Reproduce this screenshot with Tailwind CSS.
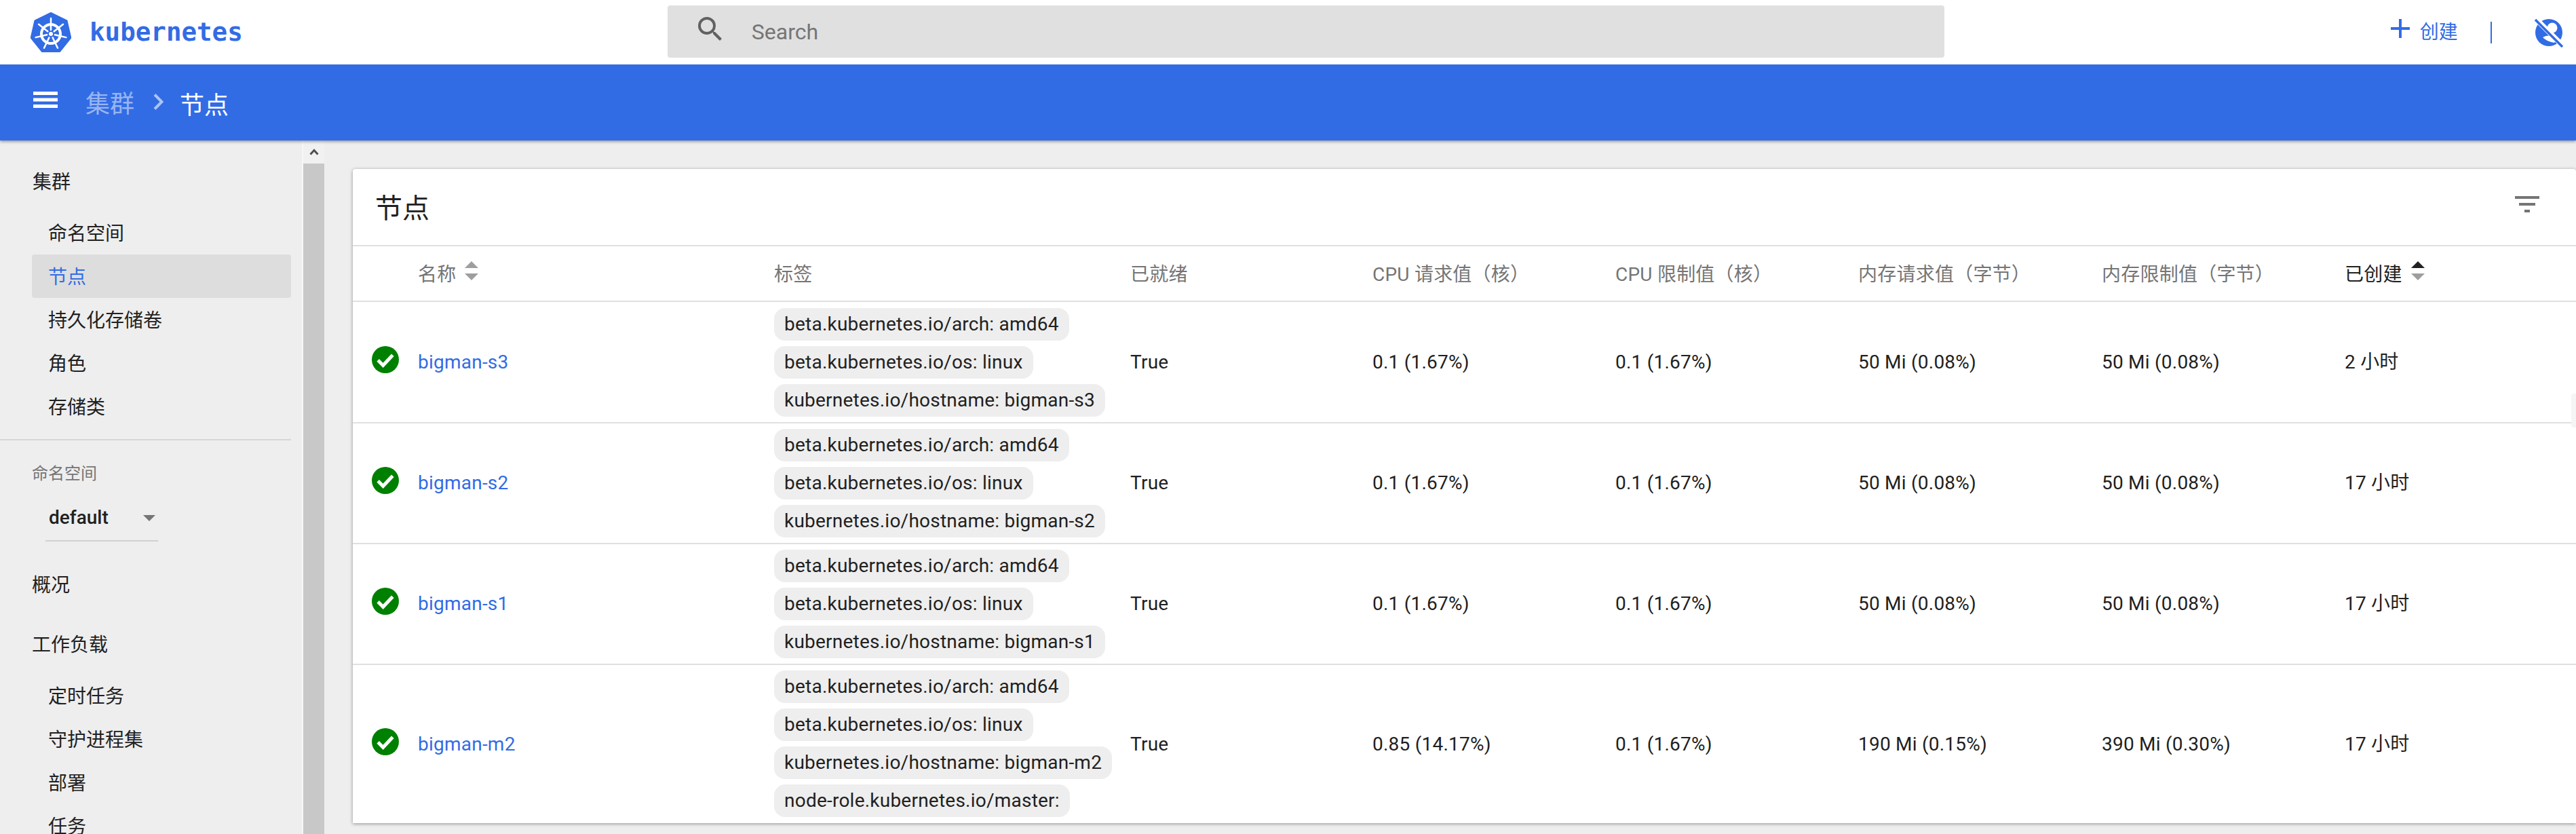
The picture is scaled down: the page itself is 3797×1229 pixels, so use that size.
<!doctype html>
<html><head><meta charset="utf-8"><script src="https://cdn.jsdelivr.net/npm/@tailwindcss/browser@4"></script></head>
<body class="h-screen w-screen overflow-hidden bg-[#eeeeee] font-['Roboto','Noto_Sans_CJK_SC',sans-serif] text-[#212121]">
<div class="flex h-screen flex-col">
<header class="flex h-[95px] shrink-0 items-center bg-white">
  <svg class="ml-[45px] h-[60px] w-[60px]" viewBox="0 0 60 60"><path d="M30 1L53.5 12.3L59.3 37.7L43 58L17 58L.7 37.7L6.5 12.3Z" fill="#326ce5" stroke="#326ce5" stroke-width="2" stroke-linejoin="round"/><g transform="translate(0 1)"><circle cx="30" cy="31" r="14" fill="none" stroke="#fff" stroke-width="4"/><path fill="none" stroke="#fff" stroke-width="2.5" stroke-linecap="round" d="M30 25V8M34.7 27.3L48 16.7M35.9 32.3L52.4 36.1M32.6 36.4L40 51.7M27.4 36.4L20 51.7M24.1 32.3L7.6 36.1M25.3 27.3L12 16.7"/><circle cx="30" cy="31" r="3" fill="#fff"/></g></svg>
  <span class="ml-[27px] font-['DejaVu_Sans_Mono',monospace] text-[37.5px] leading-none font-bold text-[#326ce5]">kubernetes</span>
  <div class="-mt-[2px] ml-[626px] flex h-[77px] w-[1882px] items-center rounded-[4px] bg-[#e0e0e0]">
    <svg class="-mt-[8px] ml-[39px] h-[48px] w-[48px]" viewBox="0 0 24 24" fill="#616161"><path d="M15.5 14h-.79l-.28-.27A6.47 6.47 0 0 0 16 9.5 6.5 6.5 0 1 0 9.5 16c1.61 0 3.09-.59 4.23-1.57l.27.28v.79l5 4.99L20.49 19l-4.99-5zm-6 0C7.01 14 5 11.99 5 9.5S7.01 5 9.5 5 14 7.01 14 9.5 11.99 14 9.5 14z"/></svg>
    <span class="ml-[37px] text-[32px] text-[#757575]">Search</span>
  </div>
  <div class="ml-[648px] flex items-center text-[#326ce5]">
    <svg class="-mt-[12px] h-[48px] w-[48px]" viewBox="0 0 24 24" fill="#326ce5"><path d="M19 13h-6v6h-2v-6H5v-2h6V5h2v6h6v2z"/></svg>
    <span class="ml-[5px] text-[28px]">创建</span>
    <span class="ml-[48px] h-[32px] w-[2px] bg-[#326ce5]"></span>
    <svg class="ml-[60px] h-[48px] w-[48px]" viewBox="0 0 48 48"><circle cx="24" cy="24" r="20" fill="#326ce5"/><circle cx="29" cy="17" r="7.5" fill="#fff"/><path d="M15 31 C22 27 31 28 37 33 L32 39 C26 38 20 36 15 31Z" fill="#fff"/><path d="M4 3L44 43" stroke="#fff" stroke-width="8"/><path d="M4 5L44 45" stroke="#326ce5" stroke-width="3.5"/></svg>
  </div>
</header>
<div class="relative z-10 flex h-[112px] shrink-0 items-center bg-[#326ce5] shadow-[0_2px_4px_rgba(0,0,0,0.35)]">
  <svg class="-mt-[8px] ml-[49px] h-[24px] w-[36px]" viewBox="0 0 36 24" fill="#fff"><rect width="36" height="5"/><rect y="9.5" width="36" height="5"/><rect y="19" width="36" height="5"/></svg>
  <span class="mt-[6px] ml-[41px] text-[36px] text-white/50">集群</span>
  <svg class="-mt-[2px] ml-[28px] h-[24px] w-[15px]" viewBox="0 0 15 24"><path d="M2 1.5L12.5 12L2 22.5" fill="none" stroke="#fff" stroke-opacity=".6" stroke-width="4"/></svg>
  <span class="mt-[10px] ml-[24px] text-[36px] text-white">节点</span>
</div>
<div class="flex min-h-0 flex-1">
  <aside class="w-[445px] shrink-0 overflow-hidden pt-[28px] text-[28px]">
    <div class="flex h-[64px] items-center pt-[4px] pl-[48px]">集群</div>
    <div class="mt-[12px] ml-[47px] w-[382px] [&>div]:pt-[3px]">
      <div class="flex h-[64px] items-center pl-[24px]">命名空间</div>
      <div class="flex h-[64px] items-center rounded-[4px] bg-[#dddddd] pl-[24px] text-[#326ce5]">节点</div>
      <div class="flex h-[64px] items-center pl-[24px]">持久化存储卷</div>
      <div class="flex h-[64px] items-center pl-[24px]">角色</div>
      <div class="flex h-[64px] items-center pl-[24px]">存储类</div>
    </div>
    <div class="mt-[16px] h-[2px] w-[429px] bg-[#d6d6d6]"></div>
    <div class="mt-[31px] pl-[47px] text-[24px] leading-[36px] text-[#757575]">命名空间</div>
    <div class="mt-[19px] ml-[67px] flex h-[63px] w-[166px] items-center justify-between border-b-2 border-[#d0d0d0] pr-[4px] pb-[5px] pl-[5px]">
      <span class="font-medium">default</span>
      <span class="h-0 w-0 border-x-[9px] border-t-[9px] border-x-transparent border-t-[#757575]"></span>
    </div>
    <div class="mt-[33px] flex h-[64px] items-center pl-[47px]">概况</div>
    <div class="mt-[23px] flex h-[64px] items-center pt-[2px] pl-[47px]">工作负载</div>
    <div class="mt-[13px] flex h-[64px] items-center pl-[71px]">定时任务</div>
    <div class="flex h-[64px] items-center pl-[71px]">守护进程集</div>
    <div class="flex h-[64px] items-center pl-[71px]">部署</div>
    <div class="flex h-[64px] items-center pl-[71px]">任务</div>
  </aside>
  <div class="flex w-[33px] shrink-0 flex-col border-l-2 border-[#f7f7f7]">
    <div class="flex h-[34px] items-center justify-center bg-[#f1f1f1]"><svg class="h-[10px] w-[14px]" viewBox="0 0 14 10"><path d="M1.5 8.5L7 2.5L12.5 8.5" fill="none" stroke="#505050" stroke-width="3"/></svg></div>
    <div class="flex-1 bg-[#c8c8c8]"></div>
  </div>
  <main class="relative min-w-0 flex-1 pt-[42px] pl-[42px]">
    <div class="rounded-t-[4px] bg-white shadow-[0_1px_5px_rgba(0,0,0,0.4)]">
      <div class="flex h-[114px] items-center justify-between border-b-2 border-[#e0e0e0] pr-[54px] pl-[33px]">
        <span class="mt-[5px] text-[40px]">节点</span>
        <svg class="-mt-[8px] h-[24px] w-[36px]" viewBox="0 0 36 24" fill="#757575"><rect width="36" height="4"/><rect x="6" y="10" width="24" height="4"/><rect x="14" y="20" width="8" height="4"/></svg>
      </div>
      <table class="w-[3277px] table-fixed text-[28px] leading-[48px] tracking-[0.23px]">
        <thead><tr class="text-left text-[#757575] [&>th]:pt-[4px]">
          <th class="h-[81px] w-[96px] border-b-2 border-[#e0e0e0] font-normal"></th>
          <th class="w-[525px] border-b-2 border-[#e0e0e0] font-normal"><span class="flex items-center gap-[13px]">名称<span class="-mt-[12px] flex flex-col gap-[8px]"><span class="h-0 w-0 border-x-[10px] border-b-[10px] border-x-transparent border-b-[#9e9e9e]"></span><span class="h-0 w-0 border-x-[10px] border-t-[10px] border-x-transparent border-t-[#9e9e9e]"></span></span></span></th>
          <th class="w-[525px] border-b-2 border-[#e0e0e0] font-normal">标签</th>
          <th class="w-[357px] border-b-2 border-[#e0e0e0] font-normal">已就绪</th>
          <th class="w-[358px] border-b-2 border-[#e0e0e0] font-normal">CPU 请求值（核）</th>
          <th class="w-[358px] border-b-2 border-[#e0e0e0] font-normal">CPU 限制值（核）</th>
          <th class="w-[359px] border-b-2 border-[#e0e0e0] font-normal">内存请求值（字节）</th>
          <th class="w-[358px] border-b-2 border-[#e0e0e0] font-normal">内存限制值（字节）</th>
          <th class="border-b-2 border-[#e0e0e0] font-normal text-[#212121]"><span class="flex items-center gap-[13px]">已创建<span class="-mt-[12px] flex flex-col gap-[8px]"><span class="h-0 w-0 border-x-[10px] border-b-[10px] border-x-transparent border-b-[#212121]"></span><span class="h-0 w-0 border-x-[10px] border-t-[10px] border-x-transparent border-t-[#9e9e9e]"></span></span></span></th>
        </tr></thead>
        <tbody>
          <tr class="[&>td]:border-b-2 [&>td]:border-[#e0e0e0]">
            <td class="pb-[8px] pl-[28px]"><svg class="h-[40px] w-[40px]" viewBox="0 0 24 24"><circle cx="12" cy="12" r="12" fill="#008000"/><path d="M5.5 12.5L10 17L18.5 8" fill="none" stroke="#fff" stroke-width="3"/></svg></td>
            <td class="text-[#326ce5]">bigman-s3</td>
            <td class="pt-[9px] pb-[8px]"><div class="flex flex-col items-start gap-[8px]"><span class="rounded-[16px] bg-[#eeeeee] px-[15px]">beta.kubernetes.io/arch: amd64</span><span class="rounded-[16px] bg-[#eeeeee] px-[15px]">beta.kubernetes.io/os: linux</span><span class="rounded-[16px] bg-[#eeeeee] px-[15px]">kubernetes.io/hostname: bigman-s3</span></div></td>
            <td>True</td><td>0.1 (1.67%)</td><td>0.1 (1.67%)</td><td>50 Mi (0.08%)</td><td>50 Mi (0.08%)</td><td>2 小时</td>
          </tr>
          <tr class="[&>td]:border-b-2 [&>td]:border-[#e0e0e0]">
            <td class="pb-[8px] pl-[28px]"><svg class="h-[40px] w-[40px]" viewBox="0 0 24 24"><circle cx="12" cy="12" r="12" fill="#008000"/><path d="M5.5 12.5L10 17L18.5 8" fill="none" stroke="#fff" stroke-width="3"/></svg></td>
            <td class="text-[#326ce5]">bigman-s2</td>
            <td class="py-[8px]"><div class="flex flex-col items-start gap-[8px]"><span class="rounded-[16px] bg-[#eeeeee] px-[15px]">beta.kubernetes.io/arch: amd64</span><span class="rounded-[16px] bg-[#eeeeee] px-[15px]">beta.kubernetes.io/os: linux</span><span class="rounded-[16px] bg-[#eeeeee] px-[15px]">kubernetes.io/hostname: bigman-s2</span></div></td>
            <td>True</td><td>0.1 (1.67%)</td><td>0.1 (1.67%)</td><td>50 Mi (0.08%)</td><td>50 Mi (0.08%)</td><td>17 小时</td>
          </tr>
          <tr class="[&>td]:border-b-2 [&>td]:border-[#e0e0e0]">
            <td class="pb-[8px] pl-[28px]"><svg class="h-[40px] w-[40px]" viewBox="0 0 24 24"><circle cx="12" cy="12" r="12" fill="#008000"/><path d="M5.5 12.5L10 17L18.5 8" fill="none" stroke="#fff" stroke-width="3"/></svg></td>
            <td class="text-[#326ce5]">bigman-s1</td>
            <td class="py-[8px]"><div class="flex flex-col items-start gap-[8px]"><span class="rounded-[16px] bg-[#eeeeee] px-[15px]">beta.kubernetes.io/arch: amd64</span><span class="rounded-[16px] bg-[#eeeeee] px-[15px]">beta.kubernetes.io/os: linux</span><span class="rounded-[16px] bg-[#eeeeee] px-[15px]">kubernetes.io/hostname: bigman-s1</span></div></td>
            <td>True</td><td>0.1 (1.67%)</td><td>0.1 (1.67%)</td><td>50 Mi (0.08%)</td><td>50 Mi (0.08%)</td><td>17 小时</td>
          </tr>
          <tr>
            <td class="pb-[8px] pl-[28px]"><svg class="h-[40px] w-[40px]" viewBox="0 0 24 24"><circle cx="12" cy="12" r="12" fill="#008000"/><path d="M5.5 12.5L10 17L18.5 8" fill="none" stroke="#fff" stroke-width="3"/></svg></td>
            <td class="text-[#326ce5]">bigman-m2</td>
            <td class="pt-[8px] pb-[9px]"><div class="flex flex-col items-start gap-[8px]"><span class="rounded-[16px] bg-[#eeeeee] px-[15px]">beta.kubernetes.io/arch: amd64</span><span class="rounded-[16px] bg-[#eeeeee] px-[15px]">beta.kubernetes.io/os: linux</span><span class="rounded-[16px] bg-[#eeeeee] px-[15px]">kubernetes.io/hostname: bigman-m2</span><span class="rounded-[16px] bg-[#eeeeee] px-[15px]">node-role.kubernetes.io/master:</span></div></td>
            <td>True</td><td>0.85 (14.17%)</td><td>0.1 (1.67%)</td><td>190 Mi (0.15%)</td><td>390 Mi (0.30%)</td><td>17 小时</td>
          </tr>
        </tbody>
      </table>
    </div>
    <div class="absolute top-[373px] right-0 h-[50px] w-[7px] rounded-l-[4px] bg-[#f5f5f5]"></div>
  </main>
</div>
</div>
</body></html>
